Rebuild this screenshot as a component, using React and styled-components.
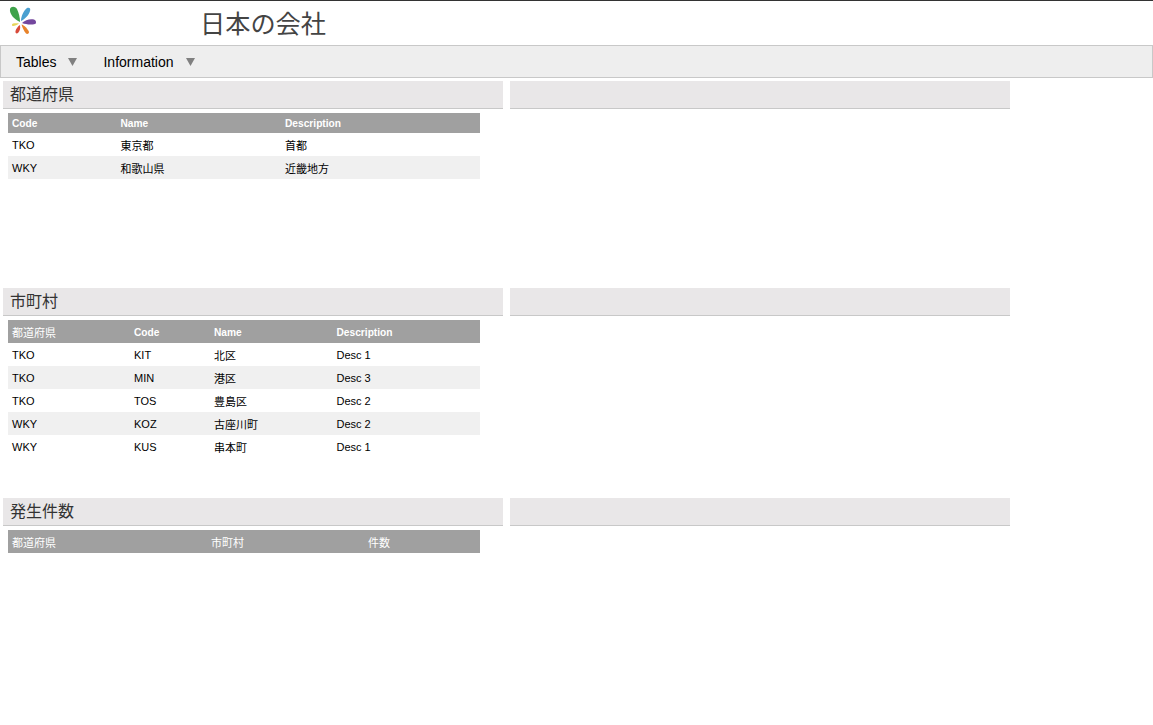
import React from "react";
import styled, { createGlobalStyle } from "styled-components";

const GlobalStyle = createGlobalStyle`
  html, body {
    margin: 0;
    padding: 0;
    background: #fff;
    font-family: "Liberation Sans", "Noto Sans CJK JP", sans-serif;
  }
`;

const Logo = () => (
  <LogoSvg viewBox="0 0 30 30">
    <path d="M12 17 C7 15 1 9 2 4 C3 1 7 1 9 4 C11 8 12 13 12 17Z" fill="#3ea24a" />
    <path d="M13 16 C13 11 16 5 19 3 C21 2 23 3 22 6 C21 10 17 14 13 16Z" fill="#4a9fd0" />
    <path d="M14 18 C17 15 22 13.5 26 14.5 C28.5 15.5 28.5 18.5 27 19 C23 20 18 19.5 14 18Z" fill="#74479e" />
    <path d="M13.5 19.5 C16 20 20 24 21 27 C21 29 19 29.5 18 28.5 C16 26 14 22 13.5 19.5Z" fill="#e8832a" />
    <path d="M12 20 C12.5 23 12 26 10 28 C8.5 29 7 28 7.5 26 C8 24 10 21 12 20Z" fill="#d84a3a" />
    <path d="M11 18.5 C9 20 6 21.5 4.5 21 C3.5 20 4 19 5 18.5 C7 18 9 18 11 18.5Z" fill="#e7d65a" />
  </LogoSvg>
);

const Caret = () => (
  <CaretSvg viewBox="0 0 9 8">
    <path d="M0 0H9L4.5 8Z" fill="#808080" />
  </CaretSvg>
);

const isAscii = (text) => /^[\x00-\x7f]*$/.test(text);

const sections = [
  {
    title: "都道府県",
    height: 207,
    headHeight: 20,
    cols: "108.5px 164.5px 1fr",
    head: ["Code", "Name", "Description"],
    rows: [
      ["TKO", "東京都", "首都"],
      ["WKY", "和歌山県", "近畿地方"],
    ],
  },
  {
    title: "市町村",
    height: 210,
    headHeight: 23,
    cols: "122px 80px 122.5px 1fr",
    head: ["都道府県", "Code", "Name", "Description"],
    rows: [
      ["TKO", "KIT", "北区", "Desc 1"],
      ["TKO", "MIN", "港区", "Desc 3"],
      ["TKO", "TOS", "豊島区", "Desc 2"],
      ["WKY", "KOZ", "古座川町", "Desc 2"],
      ["WKY", "KUS", "串本町", "Desc 1"],
    ],
  },
  {
    title: "発生件数",
    height: 210,
    headHeight: 23,
    cols: "199px 157px 1fr",
    head: ["都道府県", "市町村", "件数"],
    rows: [],
  },
];

const App = () => {
  return (
    <>
      <GlobalStyle />
      <Page>
        <Header>
          <LogoSlot>
            <Logo />
          </LogoSlot>
          <Title>日本の会社</Title>
        </Header>
        <Nav>
          <NavItem>
            Tables
            <Caret />
          </NavItem>
          <NavItem>
            Information
            <Caret />
          </NavItem>
        </Nav>
        <Content>
          {sections.map((section) => (
            <Section key={section.title} $height={section.height}>
              <Panel>
                <PanelTitle>{section.title}</PanelTitle>
                <Table>
                  <HeadRow $cols={section.cols} $height={section.headHeight}>
                    {section.head.map((label) => (
                      <HeadCell key={label} $bold={isAscii(label)}>
                        {label}
                      </HeadCell>
                    ))}
                  </HeadRow>
                  {section.rows.map((row, i) => (
                    <Row key={i} $cols={section.cols} $odd={i % 2 === 1}>
                      {row.map((value, j) => (
                        <Cell key={j}>{value}</Cell>
                      ))}
                    </Row>
                  ))}
                </Table>
              </Panel>
              <Panel>
                <PanelTitle />
              </Panel>
            </Section>
          ))}
        </Content>
      </Page>
    </>
  );
};
export default App;

const Page = styled.div`
  display: flex;
  flex-direction: column;
  min-height: 725px;
  border-top: 1px solid #333;
  box-sizing: border-box;
`;
const Header = styled.div`
  display: flex;
  align-items: center;
  height: 44px;
`;
const LogoSlot = styled.div`
  display: flex;
  width: 200px;
  padding: 4px 0 0 8px;
  box-sizing: border-box;
  align-self: flex-start;
`;
const LogoSvg = styled.svg`
  width: 30px;
  height: 30px;
`;
const Title = styled.div`
  font-size: 25.2px;
  line-height: 36px;
  color: #444;
  padding-top: 1px;
`;
const Nav = styled.div`
  display: flex;
  align-items: center;
  height: 33px;
  box-sizing: border-box;
  background: #eeeeee;
  border: 1px solid #c8c8c8;
  padding-left: 15px;
  gap: 26px;
`;
const NavItem = styled.div`
  display: flex;
  align-items: center;
  gap: 12px;
  font-size: 14px;
  color: #000;
`;
const CaretSvg = styled.svg`
  width: 9px;
  height: 8px;
`;
const Content = styled.div`
  display: flex;
  flex-direction: column;
  padding: 3px 0 0 3px;
`;
const Section = styled.div`
  display: flex;
  gap: 7px;
  height: ${(props) => props.$height}px;
`;
const Panel = styled.div`
  display: flex;
  flex-direction: column;
  width: 500px;
`;
const PanelTitle = styled.div`
  height: 28px;
  box-sizing: border-box;
  padding-left: 7px;
  background: #e9e7e8;
  border-bottom: 1px solid #c8c8c8;
  font-size: 16px;
  line-height: 27px;
  color: #333;
`;
const Table = styled.div`
  display: flex;
  flex-direction: column;
  width: 472px;
  margin: 4px 0 0 5px;
`;
const HeadRow = styled.div`
  display: grid;
  grid-template-columns: ${(props) => props.$cols};
  align-items: center;
  height: ${(props) => props.$height}px;
  background: #a0a0a0;
  color: #fff;
`;
const Row = styled.div`
  display: grid;
  grid-template-columns: ${(props) => props.$cols};
  align-items: center;
  height: 23px;
  background: ${(props) => (props.$odd ? "#f0f0f0" : "#fff")};
  color: #000;
`;
const Cell = styled.div`
  padding-left: 4px;
  font-size: 11px;
  white-space: nowrap;
`;
const HeadCell = styled(Cell)`
  font-size: ${(props) => (props.$bold ? "10.2px" : "11px")};
  line-height: 14px;
  padding-top: 2px;
  font-weight: ${(props) => (props.$bold ? "bold" : "normal")};
`;
